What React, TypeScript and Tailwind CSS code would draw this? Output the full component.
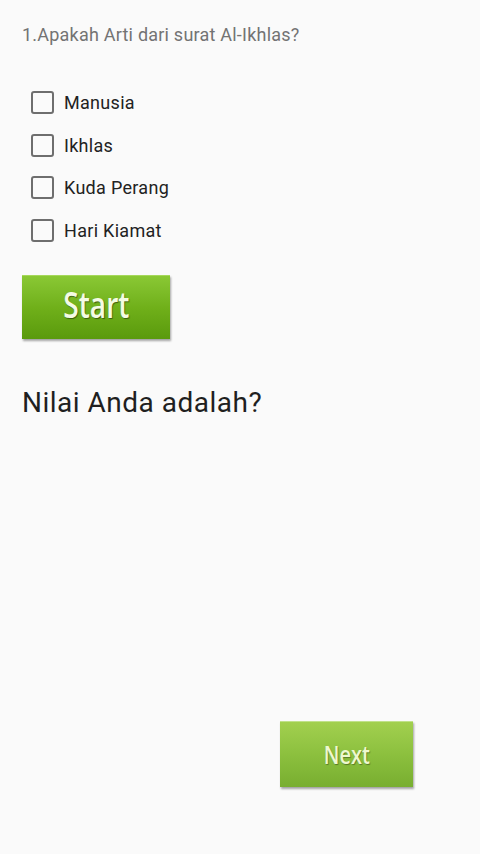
import { useState } from 'react';

const options = ['Manusia', 'Ikhlas', 'Kuda Perang', 'Hari Kiamat'];

export default function App() {
  const [checked, setChecked] = useState<boolean[]>([false, false, false, false]);

  const toggle = (i: number) => {
    setChecked((prev) => prev.map((v, idx) => (idx === i ? !v : v)));
  };

  return (
    <div className="w-[480px] h-[854px] bg-[#fafafa] flex flex-col font-['Roboto',sans-serif]">
      {/* Question */}
      <p className="ml-[22px] mt-[24px] text-[18px] leading-[22px] tracking-[0.22px] text-[#737373]">
        1.Apakah Arti dari surat Al-Ikhlas?
      </p>

      {/* Options */}
      <div className="mt-[45px] ml-[31px] flex flex-col gap-[19.5px]">
        {options.map((opt, i) => (
          <label key={opt} className="flex items-center gap-[10px] h-[23px] cursor-pointer" onClick={() => toggle(i)}>
            <span className="w-[23px] h-[23px] rounded-[3px] border-[2.5px] border-[#6e6e6e] flex items-center justify-center">
              {checked[i] && <span className="w-[11px] h-[11px] bg-[#6e6e6e]" />}
            </span>
            <span className="text-[18px] tracking-[0.3px] text-[#222222]">{opt}</span>
          </label>
        ))}
      </div>

      {/* Start button */}
      <button className="ml-[22px] mt-[33px] w-[148px] h-[64px] border-t border-t-[#a6d85a] bg-gradient-to-b from-[#8ac834] via-[#70b01a] to-[#5a9a0c] shadow-[1px_2px_2px_rgba(0,0,0,0.35)] flex items-center justify-center">
        <span className="text-[36px] leading-none text-[#f4fbe4] scale-x-[0.78] [text-shadow:1px_1px_1px_rgba(0,0,0,0.45)] font-['Open_Sans',sans-serif] font-semibold -mt-[4px]">
          Start
        </span>
      </button>

      {/* Score */}
      <p className="ml-[22px] mt-[47px] text-[28px] leading-[34px] tracking-[0.5px] text-[#1f1f1f]">Nilai Anda adalah?</p>

      {/* Next button */}
      <div className="flex justify-end mr-[67px] mt-[301px]">
        <button className="w-[133px] h-[66px] border-t border-t-[#c0e28a] bg-gradient-to-b from-[#a2d04f] via-[#8cc03e] to-[#78ae30] shadow-[1px_2px_2px_rgba(0,0,0,0.35)] flex items-center justify-center">
          <span className="text-[25px] leading-none text-[#eef8cf] scale-x-[0.8] [text-shadow:1px_1px_1px_rgba(0,0,0,0.35)] font-['Open_Sans',sans-serif] font-semibold">
            Next
          </span>
        </button>
      </div>
    </div>
  );
}
